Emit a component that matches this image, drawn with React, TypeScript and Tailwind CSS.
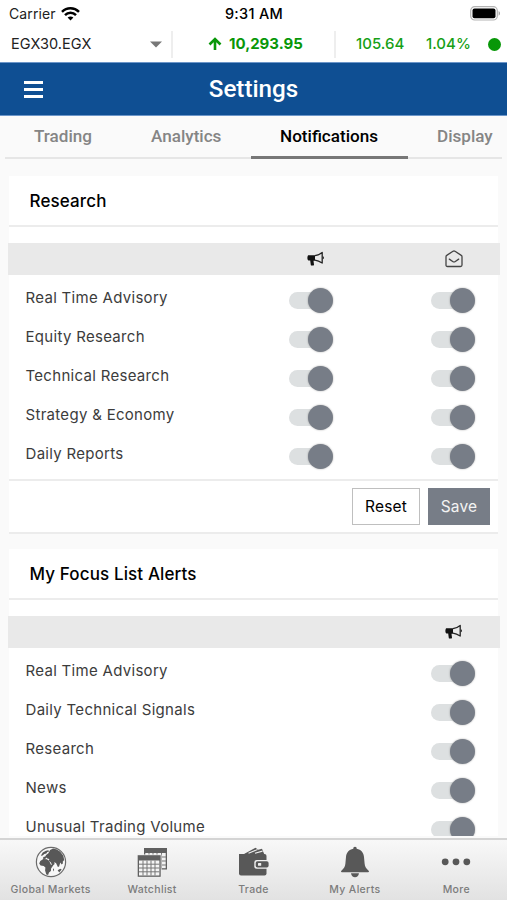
import type { ReactNode } from 'react'

interface Tab {
  label: string
  className: string
  active?: boolean
}

const TABS: Tab[] = [
  { label: 'Trading', className: 'w-[116px] pl-[29px]' },
  { label: 'Analytics', className: 'w-[130px] pl-[30px]' },
  { label: 'Notifications', className: 'w-[157px] pl-[29px]', active: true },
  { label: 'Display', className: 'w-[95px] pl-[29px]' },
]

const RESEARCH = ['Real Time Advisory', 'Equity Research', 'Technical Research', 'Strategy & Economy', 'Daily Reports']

const FOCUS_LIST = ['Real Time Advisory', 'Daily Technical Signals', 'Research', 'News', 'Unusual Trading Volume']

function WifiIcon() {
  return (
    <svg width="19" height="14" viewBox="0 0 19 14" fill="none" stroke="#000" strokeWidth="2.5">
      <path d="M1 4.8C5.7.2 13.3.2 18 4.8" />
      <path d="M4 8.1C7.1 5 11.9 5 15 8.1" />
      <path d="M6.6 10.5C8.3 9 10.7 9 12.4 10.5L9.5 13.5Z" fill="#000" stroke="none" />
    </svg>
  )
}

function BatteryIcon() {
  return (
    <svg width="31" height="15" viewBox="0 0 31 15">
      <rect x="0.7" y="0.7" width="26.6" height="13.3" rx="4" fill="#fff" stroke="#b3b3b3" strokeWidth="1.2" />
      <rect x="2.5" y="2.5" width="23" height="9.7" rx="2" fill="#000" />
      <path d="M28.6 5v4.7c1.9-.8 1.9-3.9 0-4.7Z" fill="#a3a3a3" />
    </svg>
  )
}

function MegaphoneIcon() {
  return (
    <svg width="18" height="16" viewBox="0 0 18 16">
      <path d="M1.200 4.200h6.800v5.500H6.500l.5 4c0 .5-.2.800-.6.800H4.500c-.4 0-.6-.2-.7-.6L3.200 9.400H1.400C.7 9 .4 8.100.4 7s.2-2.200.8-2.800Z" fill="#111" />
      <path d="M8 4.700C10.800 4.200 13.100 3.200 15.200 1.500V12C13.100 10.700 10.800 9.600 8 9.200" fill="none" stroke="#222" strokeWidth="1.300" strokeLinejoin="round" />
      <path d="M15.900 5.200c1.300.3 1.300 2.800 0 3.100Z" fill="#111" />
    </svg>
  )
}

function EnvelopeIcon() {
  return (
    <svg width="18" height="18" viewBox="0 0 18 18" fill="none" stroke="#444" strokeWidth="1.3" strokeLinejoin="round" strokeLinecap="round">
      <path d="M1 6.7c0-.6.2-1 .7-1.300L8 1.300c.7-.4 1.300-.4 2 0l6.300 4.100c.5.300.7.700.7 1.300V15c0 1-.5 1.500-1.500 1.500h-13C1.500 16.500 1 16 1 15Z" />
      <path d="M4.300 9.100 7.700 11.500c.9.600 1.700.6 2.600 0l3.400-2.400" />
    </svg>
  )
}

function GlobeIcon() {
  return (
    <svg width="32" height="32" viewBox="0 0 32 32">
      <circle cx="16" cy="16" r="14.6" fill="#f7f7f7" stroke="#6b6b6b" strokeWidth="1.2" />
      <g fill="#585858">
        <path d="M7.800 6.500 11 4.700l2.300-.4.900 1.100-1.900.7-1 1.500-2 .3-1.700 1.600-1.800.3Z" />
        <path d="m13.400 7.200 1.700-3.100 3-1.500 3.800.8 3.400 2.300 3 4 .9 4.300-1.500 1.700.3 1.500-1.400 1.400-1.300-2-1.200 3.800-1.200.7-1.900-4.200-2-.7.700 1.800-2.100 1.800-1.900-3.600-1.900-1.500.5-1.600-2-.5-.7-1.200-1.500 1.700-2.200-.4.500-1.700 1.900-.4.800-1.700Z" />
        <path d="m5.300 15.100 3-2.100 3.500.3 2.300 1.400 1.700 3.700 2.500.8-2.200 3.200-.2 2.500-1.900 1.700-.9 2.400-1.800-.5-1.200-3.900.3-3-1.700-1.700-3.100-.5-1.400-2Z" />
        <path d="m18 23.200.9-1 .2 1.700-.8 1.500Z" />
        <path d="m22.700 24.300 2.500-1.500 1.500.6-2.500 3Z" />
      </g>
    </svg>
  )
}

function CalendarsIcon() {
  return (
    <svg width="32" height="32" viewBox="0 0 32 32">
      <rect x="8" y="2" width="23" height="21.5" fill="#606060" />
      <path d="M9.300 7h20.400v15.200H9.300Z" fill="#f2f2f2" />
      <path d="M13 7v15M17 7v15M21 7v15M25.500 7v15M9 11h21M9 15h21M9 19h21" stroke="#777" strokeWidth="1" />
      <rect x="1" y="8.5" width="24.5" height="23" fill="#eee" />
      <rect x="1.7" y="9.2" width="23" height="21.6" fill="#606060" />
      <path d="M3 14.500h20.400v15H3Z" fill="#f4f4f4" />
      <path d="M7 14.500v15M11 14.500v15M15 14.500v15M19 14.500v15M3 18.200h20.400M3 22h20.400M3 25.800h20.400" stroke="#777" strokeWidth="1" />
    </svg>
  )
}

function WalletIcon() {
  return (
    <svg width="32" height="32" viewBox="0 0 32 32">
      <path d="m6 8 11.500-6.300 2.700 2 3.800-1 .8 2 1.400 3.300Z" fill="#585858" />
      <path d="m10.500 7.300 9-3.800M17 7.300l7.500-2.200" stroke="#efefef" strokeWidth="1.1" />
      <path d="M1 8h25.500a2 2 0 0 1 2 2v17.500a2 2 0 0 1-2 2H3a2 2 0 0 1-2-2Z" fill="#585858" />
      <rect x="16.3" y="14" width="14.7" height="8.8" rx="2.5" fill="#efefef" />
      <rect x="17.7" y="15.2" width="12.9" height="6.4" rx="1.8" fill="#585858" />
      <rect x="20" y="17" width="3.2" height="2.8" rx=".5" fill="#efefef" />
    </svg>
  )
}

function BellIcon() {
  return (
    <svg width="32" height="32" viewBox="0 0 32 32" fill="#585858">
      <path d="M16 .8c1.300 0 1.700.8 1.700 2C22 3.500 24.700 6.800 25 11l.6 6.500c.3 3.300 1.500 4.800 4 7.200.7.700.4 1.500-.5 1.500H2.900c-.9 0-1.200-.8-.5-1.500 2.500-2.400 3.700-3.900 4-7.200L7 11c.3-4.200 3-7.500 7.300-8.200 0-1.200.4-2 1.700-2Z" />
      <path d="M12 27.200h8c-.4 2.700-2 4-4 4s-3.600-1.300-4-4Z" />
    </svg>
  )
}

function MoreIcon() {
  return (
    <svg width="32" height="32" viewBox="0 0 32 32" fill="#585858">
      <circle cx="5.2" cy="15.8" r="3.4" />
      <circle cx="16" cy="15.8" r="3.4" />
      <circle cx="26.8" cy="15.8" r="3.4" />
    </svg>
  )
}

function Toggle() {
  return (
    <button className="flex h-[26px] w-11 items-center rounded-full" role="switch" aria-checked="true">
      <span className="h-[17px] w-8 shrink-0 rounded-full bg-[#dde0e1]" />
      <span className="-ml-[13px] size-[25px] shrink-0 rounded-full bg-[#777d87] shadow-[0_0_2px_rgba(0,0,0,0.35)]" />
    </button>
  )
}

function Row({ label, columns }: { label: string; columns: number }) {
  return (
    <div className="flex h-[39px] items-start pl-[16.5px]">
      <span className="mt-[2px] flex-1 text-[15px] leading-6 tracking-[0.3px] whitespace-nowrap text-[#3c3c3c]">{label}</span>
      {columns === 2 && <div className="mt-[3px] mr-[98px]"><Toggle /></div>}
      <div className="mt-[3px] mr-[23.5px]"><Toggle /></div>
    </div>
  )
}

function Section({ title, icons, children }: { title: string; icons: ReactNode; children: ReactNode }) {
  return (
    <section className="mx-[9px] bg-white">
      <h2 className="flex h-[51px] items-center rounded-t border-b-2 border-[#ececec] pt-[2px] pl-[20.5px] text-[17px] font-medium tracking-[0.12px] text-black">
        {title}
      </h2>
      <div className="-mr-[2px] -ml-[1px] mt-[16px] flex h-8 items-center justify-end bg-[#e9e9e9] pr-[37px]">
        {icons}
      </div>
      <div className="pt-[9px]">{children}</div>
    </section>
  )
}

function NavItem({ label, icon }: { label: string; icon: ReactNode }) {
  return (
    <a className="flex flex-1 flex-col items-center pt-[6px]">
      {icon}
      <span className="mt-[4px] text-[10.5px] leading-[15px] font-medium tracking-[0.34px] whitespace-nowrap text-[#7c7c7c]">{label}</span>
    </a>
  )
}

export default function App() {
  return (
    <div className="flex h-[900px] w-[507px] flex-col overflow-hidden bg-[#fafafa] font-['Inter',sans-serif]">
      <header className="h-[62px] shrink-0 bg-white text-black">
        <div className="grid h-[27px] grid-cols-3 items-center pr-[6px] pl-[9px] text-[14px]">
          <div className="flex items-center gap-[5px]">
            <span className="tracking-[0.1px] text-[#222]">Carrier</span>
            <WifiIcon />
          </div>
          <span className="pr-[2px] text-center text-[14.5px] font-medium tracking-[0.3px]">9:31 AM</span>
          <div className="flex justify-end"><BatteryIcon /></div>
        </div>
        <div className="flex h-[34px] items-center text-[15px]">
          <div className="flex h-[27px] w-[173px] items-center justify-between border-r-2 border-[#eee] pr-[9px] pl-[11px]">
            <span className="text-[14.5px] text-[#222]">EGX30.EGX</span>
            <svg width="12" height="7" viewBox="0 0 12 7"><path d="M0 .5h12L6 6.5Z" fill="#777" /></svg>
          </div>
          <div className="flex h-[27px] w-[163px] items-center gap-[7px] border-r-2 border-[#eee] pl-[35px] font-bold text-[#089708]">
            <svg width="14" height="14" viewBox="0 0 14 14" fill="none" stroke="#089708" strokeWidth="2.6">
              <path d="M7 13V2M1.500 7.500 7 2l5.500 5.500" />
            </svg>
            10,293.95
          </div>
          <div className="flex flex-1 items-center pl-[20px] font-medium text-[#16a016]">
            <span className="w-[70px]">105.64</span>
            <span className="w-[62px]">1.04%</span>
            <span className="size-[13px] rounded-full bg-[#089708]" />
          </div>
        </div>
      </header>

      <div className="flex h-[54px] shrink-0 items-center border-y border-[#6c96c9] bg-[#0f4f93] font-['Roboto',sans-serif]">
        <button className="ml-[23.5px] flex w-[19.5px] flex-col gap-[4px]">
          <span className="h-[3px] bg-white" />
          <span className="h-[3px] bg-white" />
          <span className="h-[3px] bg-white" />
        </button>
        <h1 className="mr-[43px] flex-1 pt-px text-center text-[24.2px] font-medium text-white">Settings</h1>
      </div>

      <nav className="mx-[5px] flex h-[43px] shrink-0 border-b-2 border-[#e6e6e6] font-['Roboto',sans-serif] text-[17.1px] font-medium">
        {TABS.map((tab) => (
          <div
            key={tab.label}
            className={`${tab.className} -mb-[2px] shrink-0 pt-[7px] leading-[27px] ${
              tab.active ? 'border-b-[3px] border-[#777] text-black' : 'text-[#858585]'
            }`}
          >
            {tab.label}
          </div>
        ))}
      </nav>

      <main className="h-[677px] shrink-0 overflow-hidden pt-[17px]">
        <Section
          title="Research"
          icons={
            <>
              <div className="mr-[120px]"><MegaphoneIcon /></div>
              <EnvelopeIcon />
            </>
          }
        >
          {RESEARCH.map((label) => <Row key={label} label={label} columns={2} />)}
          <div className="flex h-[55px] items-start justify-end gap-2 border-y-2 border-[#ececec] pt-[7px] pr-2 text-[15.5px] tracking-[0.2px]">
            <button className="h-[37px] w-[68px] border border-[#bfbfbf] text-black">Reset</button>
            <button className="h-[37px] w-[62px] bg-[#777d87] text-[#f3f3f3]">Save</button>
          </div>
        </Section>
        <div className="h-[15px]" />
        <Section title="My Focus List Alerts" icons={<MegaphoneIcon />}>
          {FOCUS_LIST.map((label) => <Row key={label} label={label} columns={1} />)}
        </Section>
      </main>

      <footer className="mt-[2px] flex h-[62px] shrink-0 border-t-2 border-[#d4d4d4] bg-linear-to-b from-[#f8f8f8] to-[#e2e2e2]">
        <NavItem label="Global Markets" icon={<GlobeIcon />} />
        <NavItem label="Watchlist" icon={<CalendarsIcon />} />
        <NavItem label="Trade" icon={<WalletIcon />} />
        <NavItem label="My Alerts" icon={<BellIcon />} />
        <NavItem label="More" icon={<MoreIcon />} />
      </footer>
    </div>
  )
}
